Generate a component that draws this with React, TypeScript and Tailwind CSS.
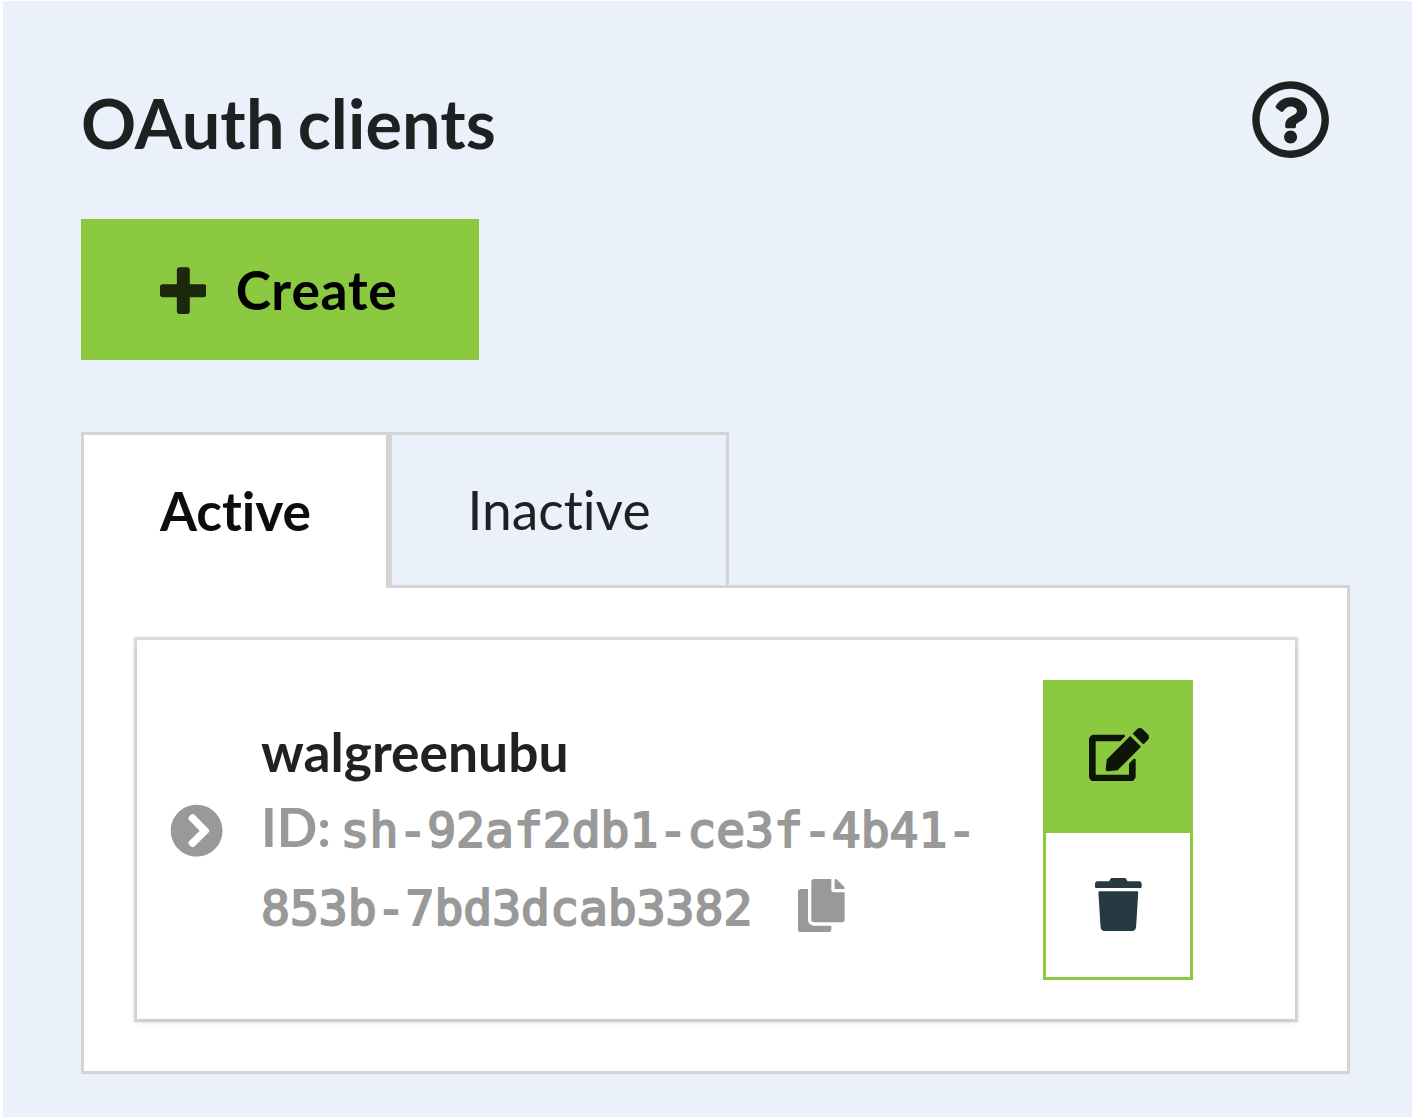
import { FaChevronCircleRight, FaCopy, FaEdit, FaRegQuestionCircle } from "react-icons/fa";

function PlusIcon({ className }: { className: string }) {
  return (
    <svg viewBox="0 0 448 512" fill="currentColor" className={className}>
      <path d="M448 294.2v-76.400c0-13.300-10.700-24-24-24H286.200V56c0-13.300-10.700-24-24-24h-76.400c-13.300 0-24 10.700-24 24v137.800H24c-13.300 0-24 10.700-24 24v76.400c0 13.300 10.700 24 24 24h137.800V456c0 13.300 10.700 24 24 24h76.400c13.300 0 24-10.700 24-24V318.200H424c13.300 0 24-10.700 24-24z" />
    </svg>
  );
}

function TrashIcon({ className }: { className: string }) {
  return (
    <svg viewBox="0 0 448 512" fill="currentColor" className={className}>
      <path d="M0 84V56c0-13.300 10.700-24 24-24h112l9.400-18.700c4-8.200 12.300-13.300 21.400-13.300h114.300c9.100 0 17.400 5.100 21.500 13.300L312 32h112c13.300 0 24 10.700 24 24v28c0 6.600-5.400 12-12 12H12C5.400 96 0 90.600 0 84zm415.200 56.700L394.800 467c-1.600 25.300-22.600 45-47.900 45H101.100c-25.300 0-46.300-19.700-47.900-45L32.800 140.700c-.4-6.900 5.100-12.700 12-12.700h358.500c6.800 0 12.300 5.800 11.900 12.700z" />
    </svg>
  );
}

function Header() {
  return (
    <header className="flex h-[80px] items-start justify-between pr-[20px]">
      <h1 className="text-[68.4px] leading-[86px] font-bold tracking-[0.1px] text-black/87 [word-spacing:-3.500px]">
        OAuth clients
      </h1>
      <FaRegQuestionCircle className="size-[79.2px] text-black/87" />
    </header>
  );
}

function Tabs() {
  return (
    <div className="relative -mb-[3px] flex h-[156px]">
      <button className="flex w-[308px] justify-center border-[3px] border-b-0 border-[#d4d4d5] bg-white pt-[43px] pl-px text-[53.33px] leading-[64px] font-bold text-black/95">
        Active
      </button>
      <button className="flex w-[340px] justify-center border-[3px] border-[#d4d4d5] pt-[42px] text-[53.33px] leading-[64px] text-black/87">
        Inactive
      </button>
    </div>
  );
}

function ClientCard() {
  return (
    <article className="flex h-[379px] w-[1158px] bg-white shadow-[0_3.33px_6.67px_0_rgba(34,36,38,0.15),0_0_0_3.33px_rgba(34,36,38,0.15)]">
      <div className="flex w-[124px] items-center pt-[3px] pl-[33.300px]">
        <FaChevronCircleRight className="size-[53.33px] text-[#999999]" />
      </div>
      <div className="w-[782px] pt-[73px]">
        <h2 className="text-[53.33px] leading-[76px] font-bold text-black/87">walgreenubu</h2>
        <p className="flex h-[78px] text-[53.33px] leading-[76px] font-bold whitespace-nowrap text-[#999999]">
          <span className="-mt-px w-[79.500px]">ID:</span>
          <span className="mt-[3px] font-['DejaVu_Sans_Mono',monospace] text-[48px] font-normal [-webkit-text-stroke:2px_#999999]">
            sh-92af2db1-ce3f-4b41-
          </span>
        </p>
        <div className="flex h-[78px] items-start text-[#999999]">
          <span className="font-['DejaVu_Sans_Mono',monospace] text-[48px] leading-[82px] [-webkit-text-stroke:2px_#999999]">
            853b-7bd3dcab3382
          </span>
          <FaCopy className="mt-[11.500px] ml-[46px] h-[53.33px] w-[46.67px]" />
        </div>
      </div>
      <div className="flex flex-col pt-[40px]">
        <button className="flex size-[150px] items-center justify-center bg-[#8bc940] pb-px pl-[2px]">
          <FaEdit className="h-[53.33px] w-[60px] text-black/90" />
        </button>
        <button className="flex size-[150px] items-center justify-center border-[3px] border-[#8bc940] bg-white pb-px pl-px">
          <TrashIcon className="h-[53.33px] w-[46.67px] text-[#263b41]" />
        </button>
      </div>
    </article>
  );
}

export default function App() {
  return (
    <div className="h-[1117px] bg-white pt-px pl-[3px] font-[Lato,sans-serif] [font-variant-ligatures:none]">
      <main className="h-[1116px] bg-[#eaf1fb] pt-[79px] pl-[78px]">
        <div className="w-[1269px]">
          <Header />
          <button className="mt-[59px] flex h-[141px] w-[398px] items-center bg-[#8bc940] pl-[78.500px]">
            <PlusIcon className="mt-[2px] h-[53.33px] w-[46.67px] text-black/80" />
            <span className="-mt-px ml-[29.500px] text-[53.33px] leading-[64px] font-bold tracking-[0.4px] text-black [font-kerning:none]">
              Create
            </span>
          </button>
          <section className="mt-[72px]">
            <Tabs />
            <div className="h-[489px] border-[3px] border-[#d4d4d5] bg-white pt-[52px] pl-[53px]">
              <ClientCard />
            </div>
          </section>
        </div>
      </main>
    </div>
  );
}
